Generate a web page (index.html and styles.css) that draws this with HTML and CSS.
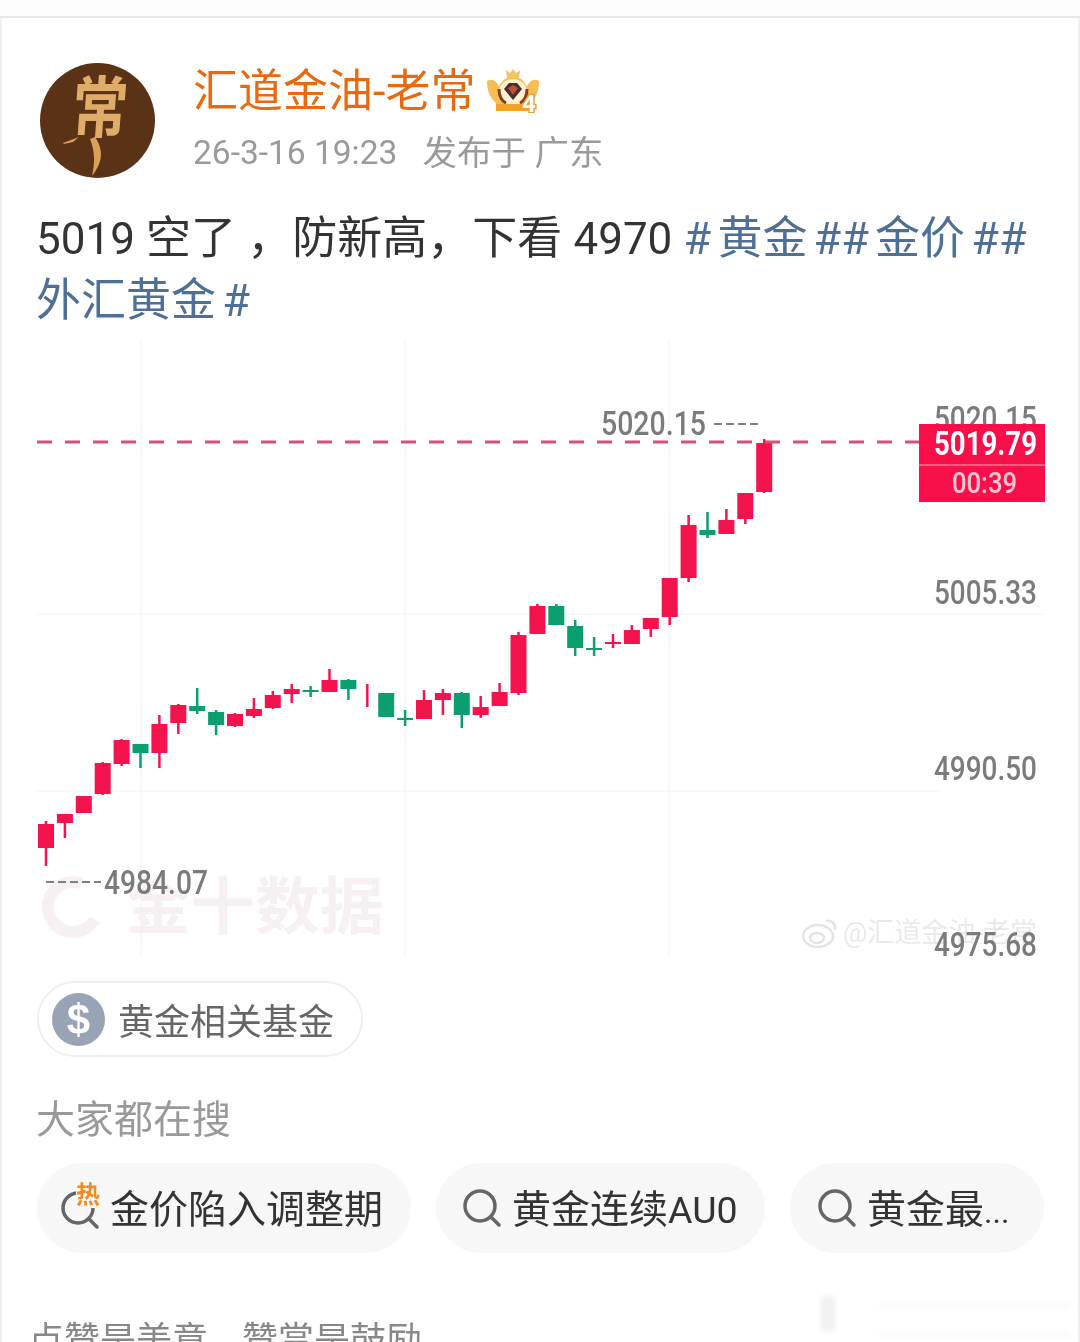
FILE: index.html
```html
<!DOCTYPE html>
<html>
  <head>
    <title>汇道金油-老常</title>
    <link rel="stylesheet" href="styles.css">
  </head>
  <body>
    <div class="top-strip"></div>
    <div class="card">
      <div class="author">
        <div class="avatar">
          <span class="avatar-char">常</span>
          <svg class="avatar-strokes" viewBox="0 0 115 115">
            <path d="M55 74 C63 86 64 98 52 113 C55 100 55 88 50 76Z"/>
            <path d="M23 80 L39 74 L33 79 L24 81Z"/>
          </svg>
        </div>
        <div class="author-info">
          <div class="name-row">
            <span class="name">汇道金油-老常</span>
            <svg class="crown" viewBox="0 0 54 46">
              <path d="M1 14 C6 11 11 14 13 20 C15 14 20 10 27 10 C34 10 39 14 41 20 C43 14 48 11 53 14 C53 24 50 31 44 36 L44 44 L10 44 L10 36 C4 31 1 24 1 14Z" fill="#f7bd55"/>
              <path d="M21 11 L20 3 L24 6 L27 2 L30 6 L34 3 L33 11Z" fill="#f4c35f"/>
              <ellipse cx="27" cy="25" rx="14" ry="13" fill="#fff0d2"/>
              <path d="M13 22 C13 29 16 34 20 36" class="crown-arc"/>
              <path d="M41 22 C41 29 38 34 34 36" class="crown-arc"/>
              <path d="M18 22 L23 16 L31 16 L36 22 L27 33Z" fill="#4f2b2b"/>
              <path d="M22 21 L27 18 L32 21 L27 28Z" fill="#b4553f"/>
              <rect x="10" y="37" width="34" height="7" fill="#f0a326"/>
              <text class="crown-level" x="36" y="45">4</text>
            </svg>
          </div>
          <div class="meta"><span class="meta-time">26-3-16 19:23</span><span>发布于 广东</span></div>
        </div>
      </div>

      <p class="post"><span class="num">5019</span> 空了 ，防新高，下看 <span class="num">4970</span> <a class="tag"># 黄金 ## 金价 ## 外汇黄金 #</a></p>

      <svg class="chart" viewBox="36 338 1008 620">
        <g class="grid">
          <line x1="140" y1="338" x2="140" y2="955"/>
          <line x1="404" y1="338" x2="404" y2="955"/>
          <line x1="668" y1="338" x2="668" y2="955"/>
          <line x1="36" y1="613" x2="1044" y2="613"/>
          <line x1="36" y1="790" x2="940" y2="790"/>
        </g>
        <g class="watermark">
          <circle cx="72" cy="906" r="25" pathLength="100" stroke-dasharray="72 28" transform="rotate(30 72 906)"/>
          <text class="wm-big" x="125" y="928" textLength="258" lengthAdjust="spacingAndGlyphs">金十数据</text>
          <text class="wm-small" x="842" y="941" textLength="194" lengthAdjust="spacingAndGlyphs">@汇道金油-老常</text>
          <g class="wm-logo">
            <ellipse cx="817" cy="935" rx="15" ry="11"/>
            <ellipse cx="816" cy="937" rx="7" ry="5"/>
            <path d="M825 920 C831 919 835 923 834 929"/>
          </g>
        </g>
        <g id="candles"></g>
        <line class="last-line" x1="36" y1="441" x2="920" y2="441"/>
        <text class="axis" x="933" y="429" textLength="103" lengthAdjust="spacingAndGlyphs">5020.15</text>
        <text class="axis" x="933" y="603" textLength="103" lengthAdjust="spacingAndGlyphs">5005.33</text>
        <text class="axis" x="933" y="779" textLength="103" lengthAdjust="spacingAndGlyphs">4990.50</text>
        <text class="axis" x="933" y="955" textLength="103" lengthAdjust="spacingAndGlyphs">4975.68</text>
        <text class="axis" x="600" y="434" textLength="105" lengthAdjust="spacingAndGlyphs">5020.15</text>
        <line class="mark-line" x1="713" y1="423" x2="758" y2="423"/>
        <text class="axis" x="103" y="893" textLength="104" lengthAdjust="spacingAndGlyphs">4984.07</text>
        <line class="mark-line" x1="45" y1="881" x2="100" y2="881"/>
        <rect class="price-tag" x="918" y="423" width="126" height="78"/>
        <line class="price-split" x1="918" y1="464" x2="1044" y2="464"/>
        <text class="tag-price" x="933" y="454" textLength="103" lengthAdjust="spacingAndGlyphs">5019.79</text>
        <text class="tag-time" x="951" y="492" textLength="65" lengthAdjust="spacingAndGlyphs">00:39</text>
      </svg>

      <div class="fund-chip">
        <span class="fund-icon">$</span>
        <span>黄金相关基金</span>
      </div>

      <div class="search-title">大家都在搜</div>
      <div class="pills">
        <div class="pill pill-hot">
          <span class="hot-icon">
            <svg class="search-icon" viewBox="0 0 40 40"><circle cx="18" cy="18" r="15"/><line x1="29" y1="29" x2="37" y2="37"/></svg>
            <span class="hot-mark">热</span>
          </span>
          <span>金价陷入调整期</span>
        </div>
        <div class="pill pill-au">
          <svg class="search-icon" viewBox="0 0 40 40"><circle cx="18" cy="18" r="15"/><line x1="29" y1="29" x2="37" y2="37"/></svg>
          <span>黄金连续<span class="latin">AU0</span></span>
        </div>
        <div class="pill pill-more">
          <svg class="search-icon" viewBox="0 0 40 40"><circle cx="18" cy="18" r="15"/><line x1="29" y1="29" x2="37" y2="37"/></svg>
          <span>黄金最<span class="dots">...</span></span>
        </div>
      </div>

      <div class="footer-row">
        <span>点赞是美意</span><span>赞赏是鼓励</span>
        <div class="ghost"><div class="ghost-bar"></div><div class="ghost-lines"></div></div>
      </div>
    </div>

    <script>
      // i, wick top, wick bottom, body top, body bottom, colour
      var data = [
        [0, 820, 865, 823, 847, "r"], [1, 813, 837, 813, 822, "r"], [2, 795, 812, 795, 812, "r"],
        [3, 761, 794, 762, 793, "r"], [4, 738, 765, 739, 763, "r"], [5, 743, 767, 743, 752, "g"],
        [6, 714, 767, 723, 752, "r"], [7, 703, 733, 704, 722, "r"], [8, 687, 713, 705, 710, "g"],
        [9, 709, 734, 711, 724, "g"], [10, 712, 726, 713, 725, "r"], [11, 697, 717, 708, 715, "r"],
        [12, 690, 708, 694, 707, "r"], [13, 683, 702, 688, 693, "r"], [14, 685, 696, 689, 691, "g"],
        [15, 668, 691, 679, 691, "r"], [16, 678, 699, 679, 688, "g"], [17, 683, 706, 694, 695, "r"],
        [18, 692, 716, 692, 716, "g"], [19, 709, 725, 717, 719, "g"], [20, 689, 718, 699, 718, "r"],
        [21, 688, 714, 692, 699, "r"], [22, 691, 727, 692, 714, "g"], [23, 695, 717, 706, 714, "r"],
        [24, 682, 705, 691, 705, "r"], [25, 631, 694, 634, 692, "r"], [26, 603, 633, 605, 633, "r"],
        [27, 603, 624, 605, 624, "g"], [28, 619, 655, 625, 647, "g"], [29, 636, 655, 647, 649, "g"],
        [30, 633, 647, 641, 643, "r"], [31, 624, 643, 629, 643, "r"], [32, 617, 636, 617, 628, "r"],
        [33, 577, 624, 577, 616, "r"], [34, 514, 581, 524, 577, "r"], [35, 511, 537, 529, 534, "g"],
        [36, 508, 533, 519, 533, "r"], [37, 492, 523, 492, 518, "r"], [38, 438, 492, 442, 491, "r"]
      ];
      var ns = "http://www.w3.org/2000/svg";
      var group = document.getElementById("candles");
      data.forEach(function (c) {
        var x = 45 + 18.9 * c[0];
        var wick = document.createElementNS(ns, "line");
        wick.setAttribute("x1", x);
        wick.setAttribute("x2", x);
        wick.setAttribute("y1", c[1]);
        wick.setAttribute("y2", c[2]);
        wick.setAttribute("class", "wick " + c[5]);
        group.appendChild(wick);
        if (c[0] == 17) return; // this one has no body, just the wick
        var body = document.createElementNS(ns, "rect");
        body.setAttribute("x", x - 8);
        body.setAttribute("y", c[3]);
        body.setAttribute("width", 16);
        body.setAttribute("height", c[4] - c[3]);
        body.setAttribute("class", "body " + c[5]);
        group.appendChild(body);
      });
    </script>
  </body>
</html>
```

FILE: styles.css
```css
html, body {
  margin: 0;
  height: 1342px;
  overflow: hidden;
  background-color: #fff;
}
body {
  font-family: Roboto, "Noto Sans CJK SC", sans-serif;
  color: #333;
}
.top-strip {
  height: 16px;
  background-color: #fdfdfd;
}
.card {
  height: 1326px;
  box-sizing: border-box;
  border-top: 2px solid #e9e9e9;
  border-left: 2px solid #eee;
  border-right: 2px solid #eee;
  padding: 45px 34px 0 35px;
  filter: blur(0.35px);
}

/* header */
.author {
  display: flex;
  gap: 38px;
  margin-left: 3px;
}
.avatar {
  position: relative;
  width: 115px;
  height: 115px;
  border-radius: 50%;
  flex-shrink: 0;
  background-color: #5a3216;
  display: flex;
  justify-content: center;
  align-items: flex-start;
  overflow: hidden;
}
.avatar-char {
  font-size: 56px;
  line-height: 76px;
  font-weight: 700;
  color: #e0ac69;
  transform: translate(2px, 8px) scale(1, 1.2) skewX(-5deg);
}
.avatar-strokes {
  position: absolute;
  top: 0;
  left: 0;
  width: 115px;
  height: 115px;
  fill: #d9a05a;
}
.author-info {
  display: flex;
  flex-direction: column;
  gap: 10px;
  padding-top: 1px;
}
.name-row {
  display: flex;
  align-items: center;
  gap: 11px;
  height: 56px;
}
.name {
  font-size: 45px;
  line-height: 56px;
  color: #e8690f;
}
.crown {
  width: 54px;
  height: 46px;
  margin-top: -5px;
}
.crown-arc {
  fill: none;
  stroke: #8a3b20;
  stroke-width: 3;
}
.crown-level {
  font-size: 24px;
  font-weight: 700;
  fill: #fff;
  stroke: #e8a033;
  stroke-width: 3;
  paint-order: stroke;
}
.meta {
  display: flex;
  gap: 25px;
  font-size: 34.5px;
  line-height: 46px;
  color: #9a9a9a;
}
.meta-time {
  font-size: 33.5px;
}

/* post text */
.post {
  margin: 30px 0 0 -1px;
  font-size: 45px;
  line-height: 61px;
  color: #333;
}
.num {
  font-size: 44px;
}
.tag {
  color: #4f7096;
  word-spacing: -5px;
}

/* chart */
.chart {
  display: block;
  width: 1008px;
  height: 620px;
  margin-top: 8px;
  filter: blur(0.5px);
}
.grid line {
  stroke: #f6f5f7;
  stroke-width: 1.5;
}
.watermark {
  opacity: 0.85;
}
.watermark circle {
  fill: none;
  stroke: #f6eef0;
  stroke-width: 12;
}
.wm-big {
  font-size: 62px;
  font-weight: 700;
  fill: #f6eef0;
}
.wm-small {
  font-size: 27px;
  fill: #e6e6e6;
}
.wm-logo ellipse, .wm-logo path {
  fill: none;
  stroke: #dedede;
  stroke-width: 2.5;
}
.wick {
  stroke-width: 2.5;
}
.wick.r { stroke: #f5134d; }
.wick.g { stroke: #0b9e70; }
.body.r { fill: #f5134d; }
.body.g { fill: #0b9e70; }
.last-line {
  stroke: #d94f76;
  stroke-width: 3;
  stroke-dasharray: 15 13;
}
.mark-line {
  stroke: #808080;
  stroke-width: 2;
  stroke-dasharray: 8 4;
}
.axis {
  font-size: 34px;
  font-weight: 500;
  fill: #7b7b7d;
}
.price-tag {
  fill: #f90f4a;
}
.price-split {
  stroke: #fb5d82;
  stroke-width: 2;
}
.tag-price {
  font-size: 34px;
  font-weight: 700;
  fill: #fff;
}
.tag-time {
  font-size: 29px;
  font-weight: 500;
  fill: #fcc3d0;
}

/* fund chip */
.fund-chip {
  display: flex;
  align-items: center;
  gap: 13px;
  width: fit-content;
  height: 76px;
  box-sizing: border-box;
  margin-top: 22px;
  padding: 0 27px 0 13px;
  border: 2px solid #efefef;
  border-radius: 38px;
  font-size: 36px;
  color: #666;
}
.fund-icon {
  width: 53px;
  height: 53px;
  border-radius: 50%;
  background-color: #98a3b5;
  color: #fff;
  font-family: "Liberation Sans", sans-serif;
  font-size: 42px;
  font-weight: 700;
  line-height: 53px;
  text-align: center;
}

/* search */
.search-title {
  margin: 37px 0 0 -1px;
  font-size: 39px;
  line-height: 52px;
  color: #999;
}
.pills {
  display: flex;
  gap: 25px;
  margin-top: 17px;
}
.pill {
  display: flex;
  align-items: center;
  gap: 10px;
  height: 90px;
  box-sizing: border-box;
  padding-bottom: 4px;
  border-radius: 45px;
  background-color: #f7f7f7;
  font-size: 39px;
  color: #333;
}
.pill .search-icon {
  margin-top: 4px;
}
.pill-hot { width: 374px; padding-left: 23px; }
.pill-au { width: 329px; padding-left: 26px; }
.pill-more { width: 254px; padding-left: 27px; }
.search-icon {
  width: 40px;
  height: 40px;
  flex-shrink: 0;
  fill: none;
  stroke: #666;
  stroke-width: 3.5;
  stroke-linecap: round;
}
.latin {
  font-size: 37.5px;
}
.dots {
  font-size: 32px;
}
.hot-icon {
  position: relative;
  display: flex;
  width: 40px;
  height: 40px;
}
.hot-mark {
  position: absolute;
  top: -4px;
  left: 16px;
  font-size: 24px;
  line-height: 26px;
  font-weight: 700;
  color: #f58a1f;
  background-color: #f7f7f7;
}

/* footer */
.footer-row {
  display: flex;
  gap: 34px;
  margin: 65px 0 0 -9px;
  font-size: 36px;
  line-height: 46px;
  color: #888;
}
.ghost {
  display: flex;
  gap: 45px;
  margin-left: auto;
  margin-right: -26px;
  margin-top: -22px;
  filter: blur(2px);
}
.ghost-bar {
  width: 14px;
  height: 35px;
  background-color: #f1f1f1;
}
.ghost-lines {
  width: 190px;
  height: 26px;
  margin-top: 8px;
  border-top: 3px solid #f7f7f7;
  border-bottom: 3px solid #f7f7f7;
}
```
